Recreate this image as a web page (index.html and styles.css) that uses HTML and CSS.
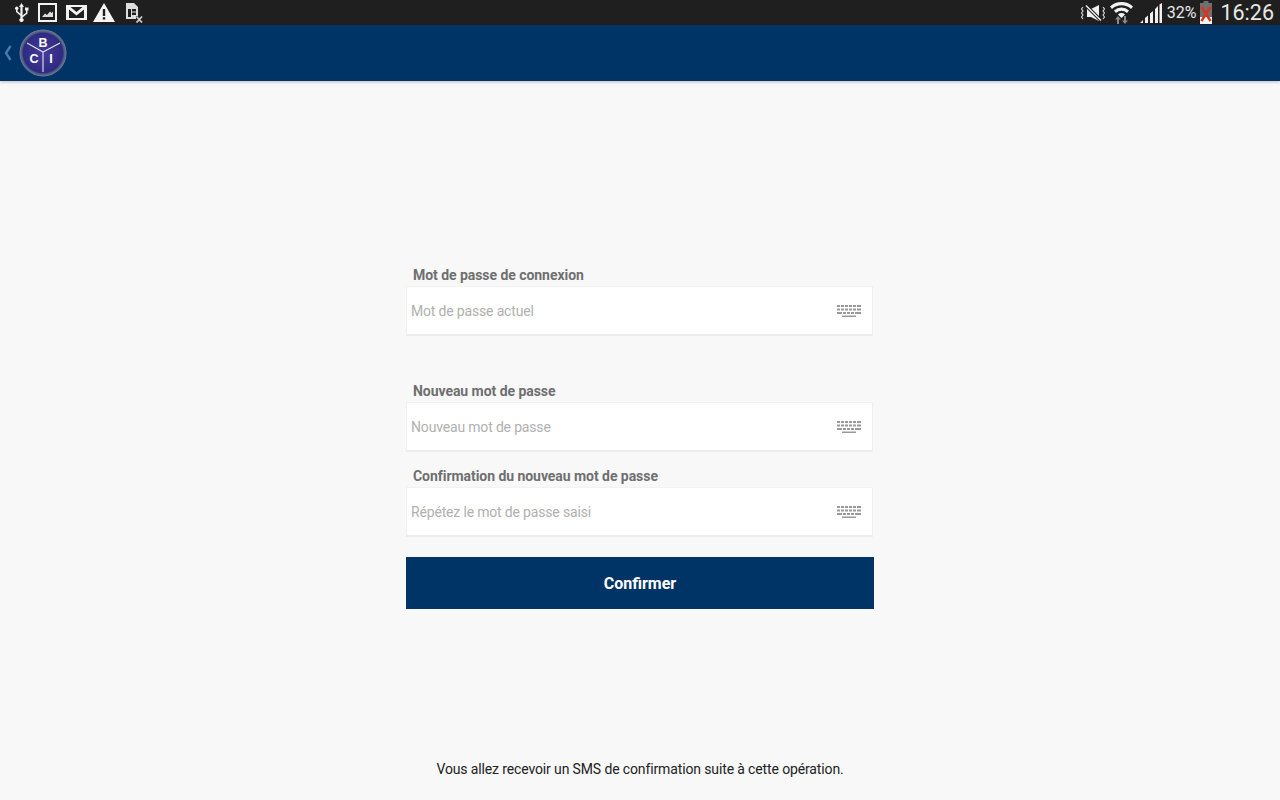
FILE: index.html
```html
<!DOCTYPE html>
<html lang="fr">
<head>
    <meta charset="UTF-8">
    <title>Modifier le mot de passe</title>
    <link rel="stylesheet" href="styles.css">
</head>
<body>
    <div class="status-bar">
        <div class="status-left">
            <svg class="ico usb" width="15" height="19" viewBox="0 0 15 19"><path d="M7.500 0 L10 4 H8.600 V12.500 L12 9.800 V7.500 H11 V4.500 H14.500 V7.500 H13.500 V10.500 L8.600 14.500 V15.200 A2.100 2.100 0 1 1 6.400 15.200 V12.800 L2 9 V6.800 A1.700 1.700 0 1 1 3.500 6.800 V8.300 L6.400 10.800 V4 H5 Z" fill="#f0f0f0"/></svg>
            <svg class="ico pic" width="19" height="19" viewBox="0 0 19 19"><path d="M0 0H19V19H0Z M2 2V17H17V2Z" fill="#f2f2f2" fill-rule="evenodd"/><path d="M4 14 L7 10.500 L9 12 L12 8.500 L13.500 10 L15 8.500 V14Z" fill="#ddd"/></svg>
            <svg class="ico mail" width="21" height="15" viewBox="0 0 21 15"><path d="M0 0H21V15H0Z M3 4.500V13H18V4.500L10.500 10.500Z M4.500 2L10.500 7L16.500 2Z" fill="#f2f2f2" fill-rule="evenodd"/></svg>
            <svg class="ico warn" width="22" height="19" viewBox="0 0 22 19"><path d="M11 0L22 19H0Z M9.800 6V13H12.200V6Z M9.800 14.200V16.500H12.200V14.200Z" fill="#f5f5f5" fill-rule="evenodd"/></svg>
            <svg class="ico doc" width="17" height="20" viewBox="0 0 17 20"><path d="M0 0H8L12 4V13H10V16H0Z M2 6V14H5V6Z M6 6V8.500H10V6Z M6 9.500V12H10V9.500Z" fill="#ddd" fill-rule="evenodd"/><path d="M10.500 13.500L16 19.500M16 13.500L10.500 19.500" stroke="#ccc" stroke-width="1.800"/></svg>
        </div>
        <div class="status-right">
            <svg class="ico mute" width="24" height="16" viewBox="0 0 24 16"><path d="M6 4H10L18 0V16L10 12H6Z" fill="#f0f0f0"/><path d="M5 0.500L20 15.500" stroke="#1f1f1f" stroke-width="3.400"/><path d="M5 0.500L20 15.500" stroke="#f0f0f0" stroke-width="1.400"/><path d="M2 2L0.500 4L2 6L0.500 8L2 10L0.500 12L2 14M22 2L23.500 4L22 6L23.500 8L22 10L23.500 12L22 14" stroke="#ddd" stroke-width="1.100" fill="none"/></svg>
            <svg class="ico wifi" width="23" height="23" viewBox="0 0 23 23"><path d="M0 5.500A17 17 0 0 1 23 5.500L21 8A14 14 0 0 0 2 8Z M4 9.500A11 11 0 0 1 19 9.500L17 12A8 8 0 0 0 6 12Z M8 13.500A5 5 0 0 1 15 13.500L11.500 17Z" fill="#f2f2f2"/><path d="M7 23V18.500H5L8 15L11 18.500H9V23ZM14 15V19.500H12L15 23L18 19.500H16V15Z" fill="#8a8a8a"/></svg>
            <svg class="ico signal" width="22" height="20" viewBox="0 0 22 20"><path d="M0 20L3 17V20Z M5 20V15L8 12.500V20Z M10 20V10.500L13 8V20Z M15 20V6L18 3V20Z M19.500 20V1.500L22 0V20Z" fill="#f0f0f0"/></svg>
            <span class="pct">32%</span>
            <svg class="ico batt" width="12" height="23" viewBox="0 0 12 23"><path d="M3.500 0H8.500V2H12V23H0V2H3.500Z" fill="#6f6f6f"/><path d="M0 16H12V23H0Z" fill="#f4f4f4"/><path d="M1.500 6L10.500 20M10.500 6L1.500 20" stroke="#d9341c" stroke-width="2.400"/></svg>
            <span class="clock">16:26</span>
        </div>
    </div>

    <header class="app-bar">
        <svg class="back" width="8" height="16" viewBox="0 0 8 16"><path d="M6.500 1L2 8L6.500 15" fill="none" stroke="#4a7aa8" stroke-width="2.400"/></svg>
        <svg class="logo" width="48" height="48" viewBox="0 0 48 48">
            <defs>
                <radialGradient id="ball" cx="50%" cy="50%" r="50%">
                    <stop offset="0%" stop-color="#463c9c"/>
                    <stop offset="84%" stop-color="#2f2a80"/>
                    <stop offset="90%" stop-color="#4a5a84"/>
                    <stop offset="100%" stop-color="#6f8098"/>
                </radialGradient>
            </defs>
            <circle cx="24" cy="24" r="23.500" fill="url(#ball)"/>
            <path d="M24 23V43M24 23L8 14M24 23L41 14" stroke="#e4e4f4" stroke-width="1.100"/>
            <text x="24" y="18" class="logo-letter">B</text>
            <text x="15" y="34" class="logo-letter">C</text>
            <text x="32" y="34" class="logo-letter">I</text>
        </svg>
    </header>

    <main class="page">
        <form class="pwd-form">
            <div class="field field-first">
                <label class="field-label">Mot de passe de connexion</label>
                <div class="field-box">
                    <span class="placeholder">Mot de passe actuel</span>
                    <svg class="kbd" width="26" height="15" viewBox="0 0 26 15"><use href="#kbd-keys"/></svg>
                </div>
            </div>
            <div class="field field-second">
                <label class="field-label">Nouveau mot de passe</label>
                <div class="field-box">
                    <span class="placeholder">Nouveau mot de passe</span>
                    <svg class="kbd" width="26" height="15" viewBox="0 0 26 15"><use href="#kbd-keys"/></svg>
                </div>
            </div>
            <div class="field field-third">
                <label class="field-label">Confirmation du nouveau mot de passe</label>
                <div class="field-box">
                    <span class="placeholder">Répétez le mot de passe saisi</span>
                    <svg class="kbd" width="26" height="15" viewBox="0 0 26 15"><use href="#kbd-keys"/></svg>
                </div>
            </div>
            <button type="button" class="confirm">Confirmer</button>
        </form>
        <p class="note">Vous allez recevoir un SMS de confirmation suite à cette opération.</p>
    </main>

    <svg class="defs" width="0" height="0">
        <defs>
            <g id="kbd-keys" fill="#999">
                <path d="M1 1h3v2H1zM5 1h3v2H5zM9 1h3v2H9zM13 1h3v2h-3zM17 1h3v2h-3zM21 1h4v2h-4z"/>
                <path d="M1 4.500h3v2H1zM5 4.500h3v2H5zM9 4.500h3v2H9zM13 4.500h3v2h-3zM17 4.500h3v2h-3zM21 4.500h4v2h-4z"/>
                <path d="M1 8h5v2H1zM7 8h3v2H7zM11 8h3v2h-3zM15 8h3v2h-3zM19 8h6v2h-6z"/>
                <path d="M6 11.500h14v1.500H6z"/>
            </g>
        </defs>
    </svg>
</body>
</html>
```

FILE: styles.css
```css
html, body {
    margin: 0;
    padding: 0;
    height: 100%;
    overflow: hidden;
}
body {
    display: flex;
    flex-direction: column;
    background: #f8f8f8;
    font-family: Roboto, sans-serif;
}
.defs {
    display: none;
}
.status-bar {
    height: 25px;
    flex: none;
    background: #1f1f1f;
    display: flex;
    justify-content: space-between;
    align-items: center;
    color: #e8e8e8;
}
.status-left {
    display: flex;
    align-items: center;
    padding-left: 14px;
}
.status-right {
    display: flex;
    align-items: center;
    padding-right: 6px;
}
.ico {
    display: block;
}
.pic {
    margin-left: 9px;
}
.mail {
    margin-left: 9px;
}
.warn {
    margin-left: 6px;
}
.doc {
    margin-left: 11px;
}
.wifi {
    margin-left: 5px;
}
.signal {
    margin-left: 7px;
}
.pct {
    font-size: 16px;
    margin-left: 5px;
}
.batt {
    margin-left: 4px;
}
.clock {
    font-size: 21.5px;
    margin-left: 8px;
}
.app-bar {
    height: 56px;
    flex: none;
    background: #003366;
    display: flex;
    align-items: center;
    padding-left: 4px;
    box-shadow: 0 1px 3px rgba(0, 0, 0, 0.25);
}
.back {
    margin-right: 7px;
}
.logo-letter {
    fill: #fff;
    font-family: "Liberation Sans", sans-serif;
    font-size: 12.5px;
    font-weight: bold;
    text-anchor: middle;
}
.page {
    flex: 1;
    display: flex;
    flex-direction: column;
    align-items: center;
}
.pwd-form {
    width: 468px;
    padding-top: 186px;
    display: flex;
    flex-direction: column;
}
.field-label {
    display: block;
    padding-left: 7px;
    font-size: 14px;
    letter-spacing: -0.05px;
    font-weight: bold;
    line-height: 16px;
    color: #6f6f6f;
    margin-bottom: 3px;
}
.field-box {
    height: 50px;
    width: 467px;
    box-sizing: border-box;
    background: #fff;
    border-bottom: 2px solid #ececec;
    border-right: 1px solid #efefef;
    border-left: 1px solid #efefef;
    border-top: 1px solid #f2f2f2;
    display: flex;
    align-items: center;
    justify-content: space-between;
    padding: 1px 10px 0 4px;
}
.placeholder {
    font-size: 14px;
    letter-spacing: -0.17px;
    color: #b0b0b0;
}
.kbd {
    display: block;
}
.field-second {
    margin-top: 47px;
}
.field-third {
    margin-top: 16px;
}
.confirm {
    margin-top: 20px;
    height: 52px;
    border: 0;
    background: #003366;
    color: #fff;
    font-family: Roboto, sans-serif;
    font-size: 16px;
    font-weight: bold;
}
.note {
    margin: auto 0 23px;
    font-size: 14px;
    letter-spacing: -0.13px;
    line-height: 16px;
    color: #222;
}
```
